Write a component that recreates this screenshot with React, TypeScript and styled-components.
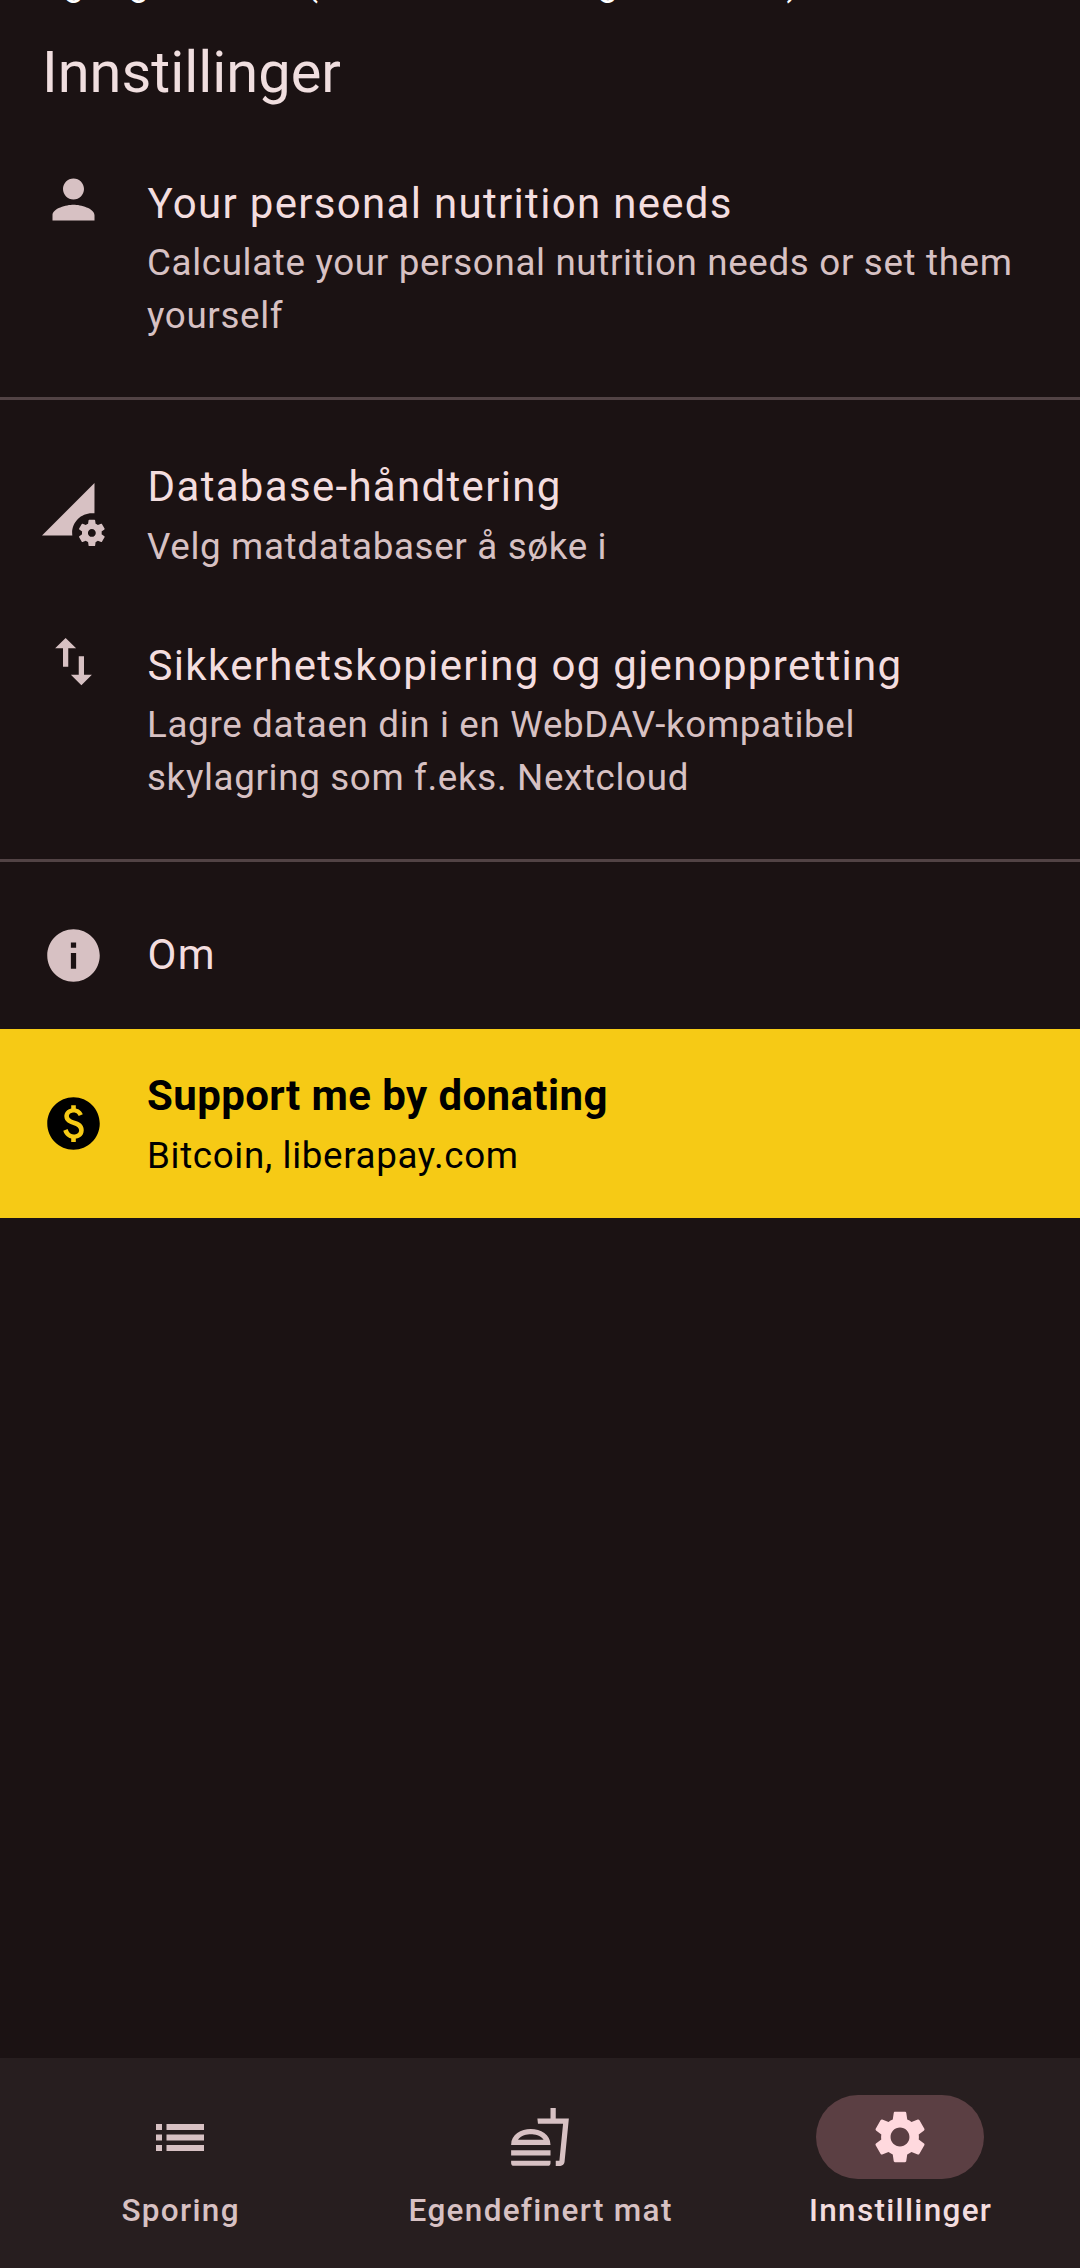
import React from "react";
import styled, { createGlobalStyle } from "styled-components";
import {
  MdPerson,
  MdPermDataSetting,
  MdImportExport,
  MdInfo,
  MdPaid,
  MdOutlineFastfood,
  MdSettings,
} from "react-icons/md";

const GlobalStyle = createGlobalStyle`
  * { box-sizing: border-box; }
  body {
    margin: 0;
    background: #1b1213;
    font-family: Roboto, "Noto Sans", sans-serif;
  }
`;

const Screen = styled.main`
  display: flex;
  flex-direction: column;
  width: 1080px;
  height: 2268px;
  overflow: hidden;
  background: #1b1213;
`;

const Caption = styled.div`
  display: flex;
  flex: none;
  align-items: flex-end;
  height: 4px;
  padding-left: 40px;
  overflow: hidden;
  color: #fff;
  font-size: 36px;
  line-height: 42px;
  white-space: pre;
`;

const Glyph = styled.span<{ $width: number }>`
  flex: none;
  width: ${(p) => p.$width}px;
  text-align: right;
`;

const Header = styled.h1`
  flex: none;
  height: 136px;
  margin: 0;
  padding: 34px 42px 0;
  color: #f0dedf;
  font-size: 57.75px;
  font-weight: 400;
  line-height: 68px;
`;

const List = styled.section`
  flex: 1;
`;

const Row = styled.div<{ $height: number; $top: number; $accent?: boolean }>`
  display: flex;
  height: ${(p) => p.$height}px;
  padding: ${(p) => p.$top}px 42px 0;
  background: ${(p) => (p.$accent ? "#f6ca15" : "transparent")};
  color: ${(p) => (p.$accent ? "#000" : "#d7c1c3")};
`;

const Leading = styled.div<{ $offset: number }>`
  flex: none;
  width: 105px;
  height: 63px;
  margin-top: ${(p) => p.$offset}px;
  font-size: 63px;
  line-height: 0;
`;

const Texts = styled.div`
  flex: 1;
  white-space: nowrap;
`;

const Title = styled.div<{ $accent?: boolean }>`
  padding-left: ${(p) => (p.$accent ? 0 : 0.6)}px;
  color: ${(p) => (p.$accent ? "#000" : "#f3dddf")};
  font-size: 42px;
  font-weight: ${(p) => (p.$accent ? 700 : 400)};
  letter-spacing: ${(p) => (p.$accent ? 0.39375 : 1.3125)}px;
  line-height: 63px;
`;

const Subtitle = styled.div<{ $gap: number }>`
  margin-top: ${(p) => p.$gap}px;
  font-size: 36.75px;
  letter-spacing: 0.65625px;
  line-height: 52.5px;
`;

const Divider = styled.hr`
  height: 3px;
  margin: 0;
  border: 0;
  background: #524345;
`;

const NavBar = styled.nav`
  display: grid;
  flex: none;
  grid-template-columns: repeat(3, 1fr);
  height: 210px;
  background: #271e1f;
`;

const NavItem = styled.div<{ $active?: boolean }>`
  display: flex;
  flex-direction: column;
  align-items: center;
  padding-top: 37px;
  color: ${(p) => (p.$active ? "#f3dddf" : "#d7c1c3")};
  font-size: 31.5px;
  font-weight: 500;
  letter-spacing: 1.3125px;
  line-height: 42px;
  white-space: nowrap;
`;

const Pill = styled.div<{ $active?: boolean }>`
  display: flex;
  align-items: center;
  justify-content: center;
  width: 168px;
  height: 84px;
  margin-bottom: 11px;
  border-radius: 42px;
  background: ${(p) => (p.$active ? "#5b3f43" : "transparent")};
  color: ${(p) => (p.$active ? "#ffd9de" : "#d7c1c3")};
  font-size: 64px;
`;

const NavLabel = styled.span`
  padding-left: 1.3125px;
`;

// A 24-unit glyph drawn at 63px, centred in a 64px box.
const navViewBox = "-0.19 -0.19 24.38 24.38";

const ListIcon = () => (
  <svg width="64" height="64" viewBox="0 0 64 64" fill="currentColor">
    <path d="M8 19h6v6H8zM8 29.4h6v6.2H8zM8 40h6v6H8zM18.5 19H56v6H18.5zM18.5 29.4H56v6.2H18.5zM18.5 40H56v6H18.5z" />
  </svg>
);

export default function App() {
  return (
    <>
      <GlobalStyle />
      <Screen>
        <Caption>
          <Glyph $width={44}>g</Glyph>
          <Glyph $width={65}>g</Glyph>
          <Glyph $width={169}>(</Glyph>
          <Glyph $width={300}>g</Glyph>
          <Glyph $width={181}>)</Glyph>
        </Caption>
        <Header>Innstillinger</Header>
        <List>
          <Row $height={257} $top={32}>
            <Leading $offset={-4}>
              <MdPerson />
            </Leading>
            <Texts>
              <Title>Your personal nutrition needs</Title>
              <Subtitle $gap={2}>
                Calculate your personal nutrition needs or set them
                <br />
                yourself
              </Subtitle>
            </Texts>
          </Row>
          <Divider />
          <Row $height={178} $top={55}>
            <Leading $offset={28}>
              <MdPermDataSetting />
            </Leading>
            <Texts>
              <Title>Database-håndtering</Title>
              <Subtitle $gap={3}>Velg matdatabaser å søke i</Subtitle>
            </Texts>
          </Row>
          <Row $height={281} $top={56}>
            <Leading $offset={-4}>
              <MdImportExport />
            </Leading>
            <Texts>
              <Title>Sikkerhetskopiering og gjenoppretting</Title>
              <Subtitle $gap={2}>
                Lagre dataen din i en WebDAV-kompatibel
                <br />
                skylagring som f.eks. Nextcloud
              </Subtitle>
            </Texts>
          </Row>
          <Divider />
          <Row $height={167} $top={61}>
            <Leading $offset={1}>
              <MdInfo />
            </Leading>
            <Texts>
              <Title>Om</Title>
            </Texts>
          </Row>
          <Row $height={189} $top={35} $accent>
            <Leading $offset={28}>
              <MdPaid />
            </Leading>
            <Texts>
              <Title $accent>Support me by donating</Title>
              <Subtitle $gap={3}>Bitcoin, liberapay.com</Subtitle>
            </Texts>
          </Row>
        </List>
        <NavBar>
          <NavItem>
            <Pill>
              <ListIcon />
            </Pill>
            <NavLabel>Sporing</NavLabel>
          </NavItem>
          <NavItem>
            <Pill>
              <MdOutlineFastfood viewBox={navViewBox} />
            </Pill>
            <NavLabel>Egendefinert mat</NavLabel>
          </NavItem>
          <NavItem $active>
            <Pill $active>
              <MdSettings viewBox={navViewBox} />
            </Pill>
            <NavLabel>Innstillinger</NavLabel>
          </NavItem>
        </NavBar>
      </Screen>
    </>
  );
}
